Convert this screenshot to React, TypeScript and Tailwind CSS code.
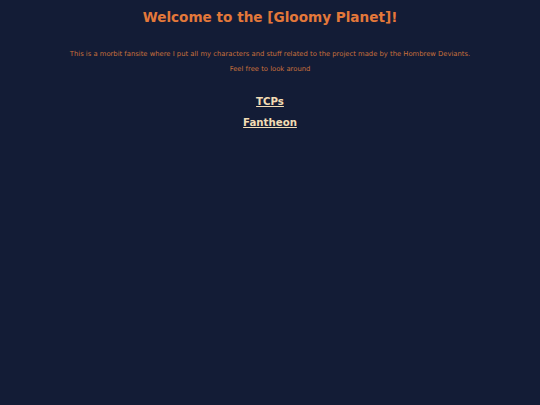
export default function App() {
  return (
    <div className="min-h-screen bg-[#131c36] text-center" style={{ fontFamily: '"DejaVu Sans", Verdana, sans-serif' }}>
      <div className="pt-[9px]">
        <h1 className="text-[13.6px] font-bold leading-[17px] text-[#e3783a]">Welcome to the [Gloomy Planet]!</h1>
        <p className="mt-[24px] text-[6.8px] leading-[9px] text-[#c8703c]">
          This is a morbit fansite where I put all my characters and stuff related to the project made by the Hombrew Deviants.
        </p>
        <p className="mt-[6px] text-[6.8px] leading-[9px] text-[#c8703c]">Feel free to look around</p>
        <div className="mt-[21px] flex flex-col items-center gap-[8px]">
          <a href="#" className="text-[10.2px] font-bold leading-[13px] text-[#f3dcb4] underline">TCPs</a>
          <a href="#" className="text-[10.2px] font-bold leading-[13px] text-[#f3dcb4] underline">Fantheon</a>
        </div>
      </div>
    </div>
  );
}
